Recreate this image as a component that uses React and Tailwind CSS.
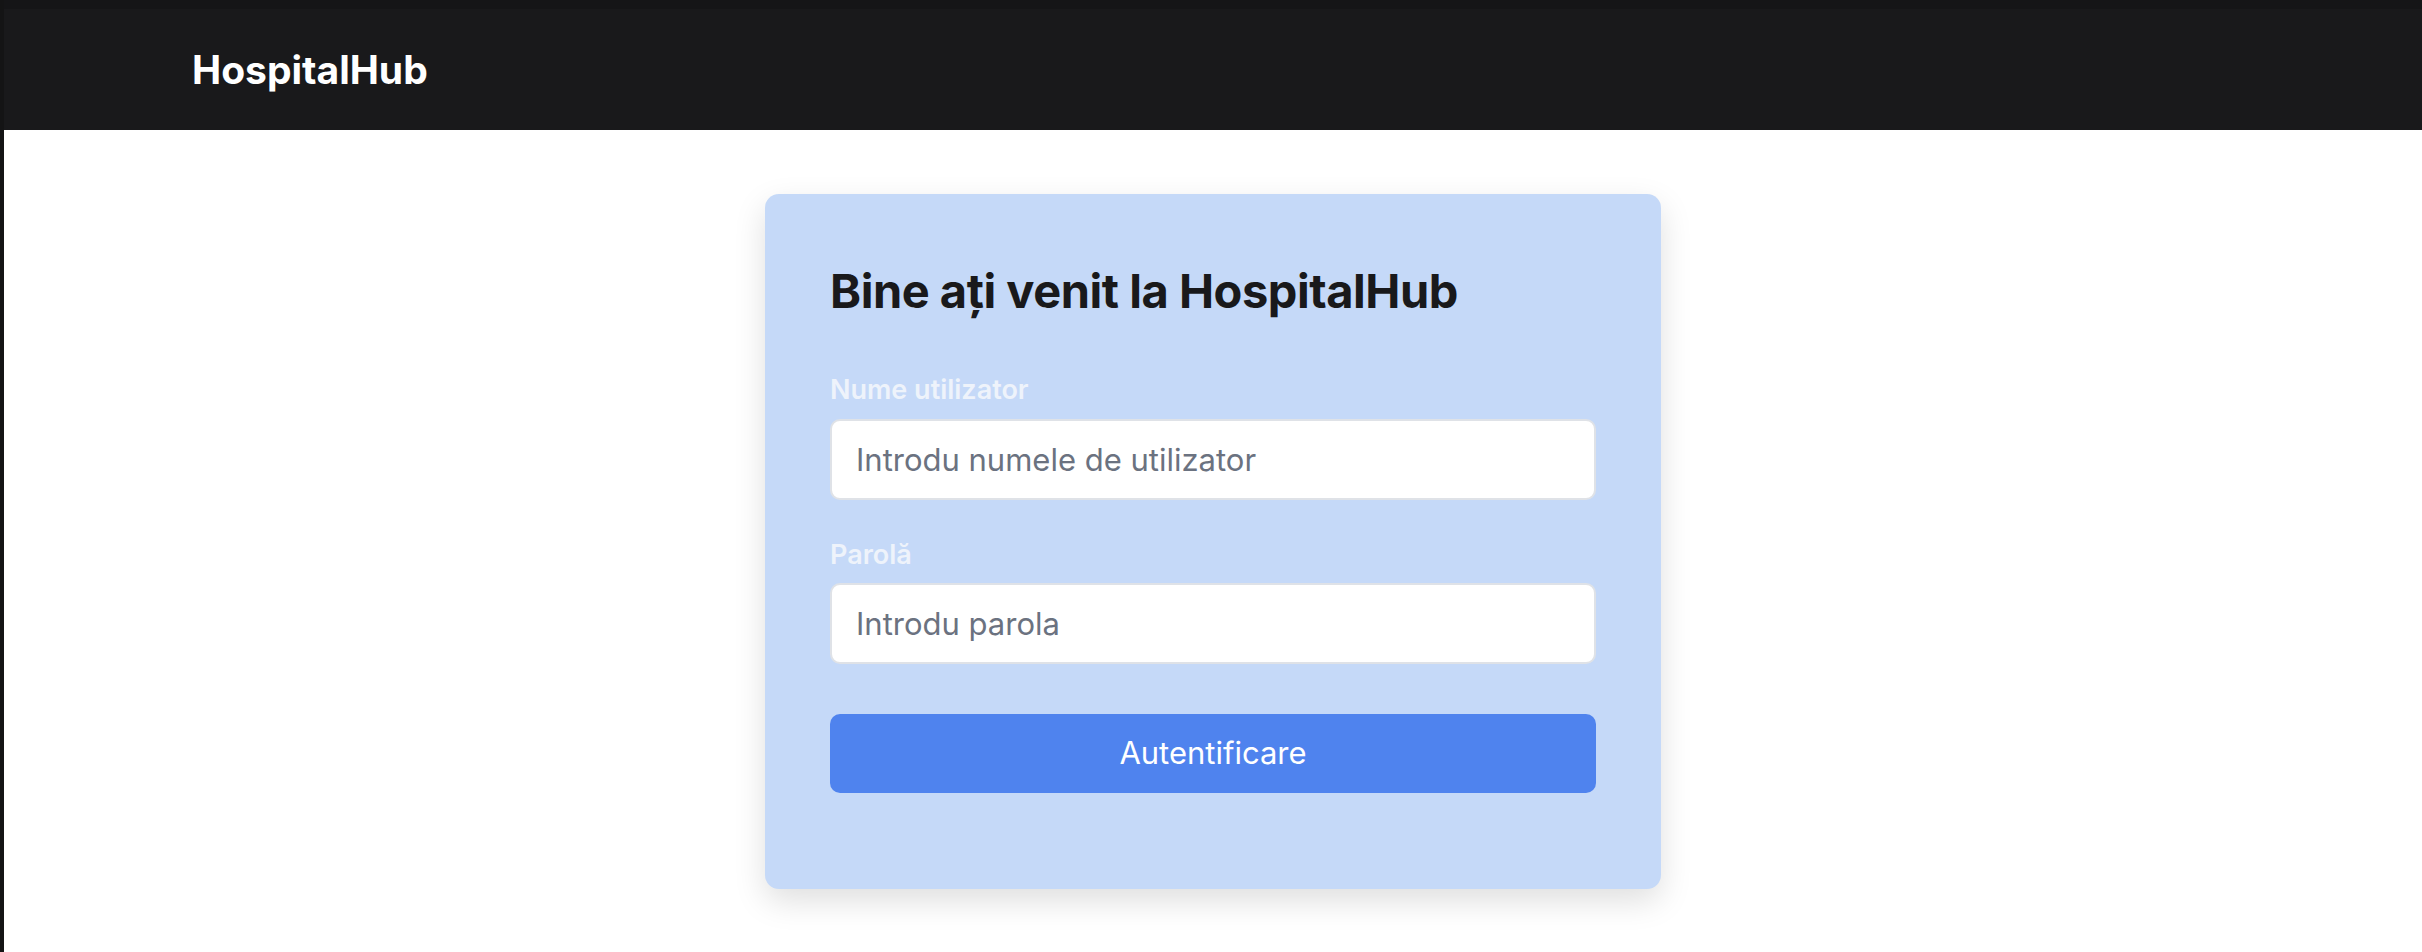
import React, { useState } from "react";

const App = () => {
  const [username, setUsername] = useState("");
  const [password, setPassword] = useState("");

  const handleSubmit = (e) => {
    e.preventDefault();
  };

  return (
    <div className="min-h-screen bg-white border-l-4 border-[#141415] font-['Inter','Noto_Sans',sans-serif]">
      {/* Top bar */}
      <header className="h-[130px] bg-[#19191b] border-t-[9px] border-[#151517] flex items-center pl-[188px]">
        <span className="text-[39px] leading-[46px] font-bold text-white">HospitalHub</span>
      </header>

      {/* Login card */}
      <div className="flex justify-center pt-[64px] pb-10">
        <div className="w-[896px] bg-[#c5d9f8] rounded-[14px] shadow-[0_12px_32px_rgba(0,0,0,0.13)] px-[65px] pt-[69px] pb-[96px]">
          <h1 className="text-[47px] leading-[56px] font-bold text-[#19191b] tracking-[-0.01em]">
            Bine ați venit la HospitalHub
          </h1>

          <form onSubmit={handleSubmit} className="flex flex-col mt-[52px]">
            <label className="text-[27px] leading-[38px] font-semibold text-[#eef3fb] mb-[10px]">Nume utilizator</label>
            <input
              type="text"
              value={username}
              onChange={(e) => setUsername(e.target.value)}
              placeholder="Introdu numele de utilizator"
              className="h-[81px] w-full bg-white border-2 border-[#dfe2e7] rounded-[10px] px-[24px] text-[31px] text-[#374151] placeholder:text-[#6b7280] focus:outline-none"
            />

            <label className="text-[27px] leading-[38px] font-semibold text-[#eef3fb] mt-[36px] mb-[9px]">Parolă</label>
            <input
              type="password"
              value={password}
              onChange={(e) => setPassword(e.target.value)}
              placeholder="Introdu parola"
              className="h-[81px] w-full bg-white border-2 border-[#dfe2e7] rounded-[10px] px-[24px] text-[31px] text-[#374151] placeholder:text-[#6b7280] focus:outline-none"
            />

            <button
              type="submit"
              className="mt-[50px] h-[79px] w-full bg-[#4f83ee] rounded-[10px] text-[31px] text-white hover:bg-[#3f73de] transition-colors"
            >
              Autentificare
            </button>
          </form>
        </div>
      </div>
    </div>
  );
};

export default App;
